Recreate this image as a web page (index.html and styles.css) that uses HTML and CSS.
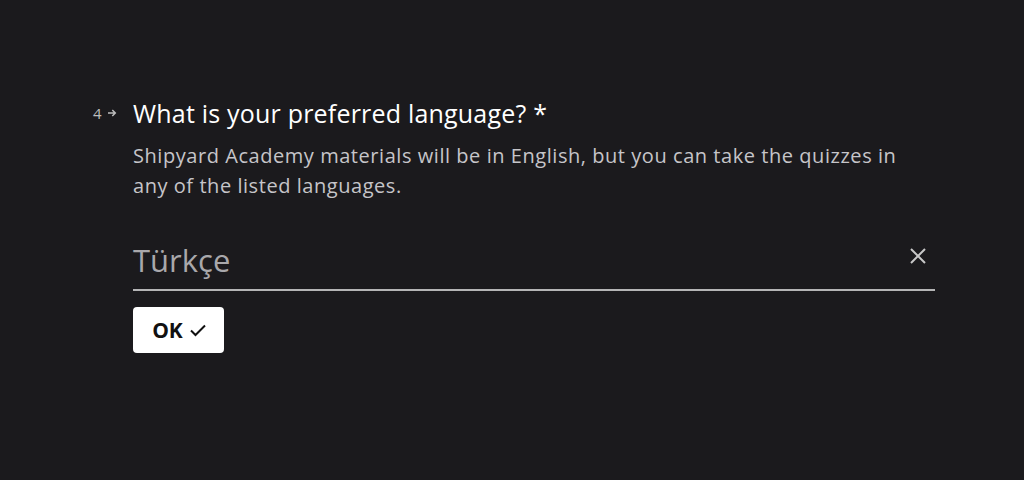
FILE: index.html
```html
<!DOCTYPE html>
<html>
<head>
<meta charset="utf-8">
<link rel="stylesheet" href="styles.css">
</head>
<body>
<main class="page">
  <section class="question">
    <div class="counter"><span class="num">4</span><svg class="arrow" width="10" height="10" viewBox="0 0 10 10"><path d="M1 5h7M5.3 2L8.3 5 5.3 8" fill="none" stroke="#bdbdbd" stroke-width="1.5"/></svg></div>
    <div class="body">
      <h1 class="title">What is your preferred language? *</h1>
      <p class="desc">Shipyard Academy materials will be in English, but you can take the quizzes in any of the listed languages.</p>
      <div class="field">
        <span class="value">Türkçe</span>
        <svg class="clear" width="18" height="18" viewBox="0 0 18 18"><path d="M2 2L16 16M16 2L2 16" stroke="#c8c8c8" stroke-width="2"/></svg>
      </div>
      <button class="ok">OK <svg width="18" height="14" viewBox="0 0 18 14"><path d="M2 7.5l4.5 4.5L16 2.5" fill="none" stroke="#111" stroke-width="2"/></svg></button>
    </div>
  </section>
</main>
</body>
</html>
```
FILE: styles.css
```css
html, body {
  margin: 0;
  background: #1b1a1d;
  font-family: "Open Sans", "Noto Sans", sans-serif;
}
.page {
  width: 1024px;
  height: 480px;
  box-sizing: border-box;
  padding-top: 95px;
}
.question {
  display: flex;
  padding-left: 93px;
}
.counter {
  width: 40px;
  display: flex;
  align-items: center;
  height: 36px;
  color: #bdbdbd;
  font-size: 15px;
  gap: 5px;
}
.body {
  width: 802px;
}
.title {
  margin: 0;
  font-size: 25px;
  letter-spacing: 0.2px;
  font-weight: 400;
  color: #ffffff;
  line-height: 36px;
}
.desc {
  margin: 10px 0 0;
  font-size: 20px;
  letter-spacing: 0.55px;
  line-height: 30px;
  color: #c6c5c9;
  width: 790px;
}
.field {
  margin-top: 33px;
  display: flex;
  align-items: center;
  justify-content: space-between;
  border-bottom: 2px solid #b5b5b6;
  height: 55px;
  padding-right: 8px;
}
.value {
  font-size: 31px;
  color: #a9a8ab;
  line-height: 44px;
  margin-top: -4px;
}
.clear {
  margin-top: -12px;
}
.ok {
  margin-top: 16px;
  width: 91px;
  height: 46px;
  background: #ffffff;
  border: none;
  border-radius: 4px;
  font-family: "Open Sans", "Noto Sans", sans-serif;
  font-weight: 700;
  font-size: 21px;
  color: #111;
  display: flex;
  align-items: center;
  justify-content: center;
  gap: 6px;
  padding: 0 0 0 2px;
}
```
